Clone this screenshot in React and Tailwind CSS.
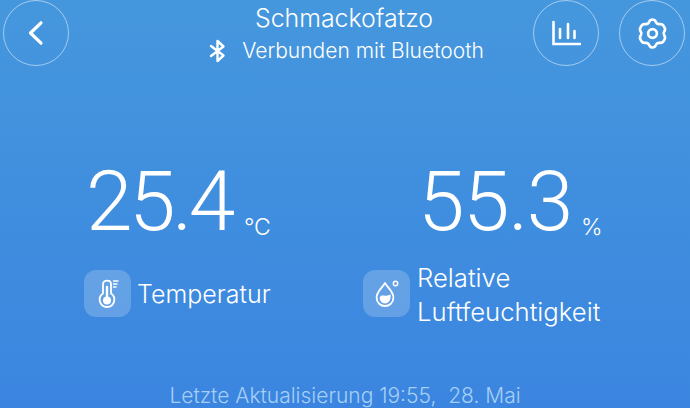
const font = { fontFamily: '"Inter", "Noto Sans", sans-serif' };
const numberFont = { fontFamily: '"Roboto", sans-serif' };

const CircleButton = ({ children }) => (
  <div className="flex h-[66px] w-[66px] shrink-0 items-center justify-center rounded-full border border-white/50">
    {children}
  </div>
);

const Header = () => (
  <div className="grid h-[66px] grid-cols-[1fr_auto_1fr] items-start pl-[3px] pr-[5px]">
    <CircleButton>
      <svg width="24" height="30" viewBox="0 0 24 30" fill="none" stroke="white" strokeWidth="3.2" strokeLinecap="round" strokeLinejoin="round">
        <path d="M17 4.8 L6.5 15 L17 25.2" />
      </svg>
    </CircleButton>
    <div className="flex flex-col items-center pt-[2px] font-light text-white">
      <div className="text-[24.9px] leading-[32px]">Schmackofatzo</div>
      <div className="ml-[5px] flex items-center gap-[15px] pt-[2px] text-[21px] leading-[30px]">
        <svg width="18" height="24" viewBox="0 0 18 24" fill="none" stroke="white" strokeWidth="2.4" strokeLinejoin="round" strokeLinecap="round">
          <path d="M2 7 L14.5 16.5 L8.5 22 L8.5 2 L14.5 7.5 L2 17" />
        </svg>
        <span>Verbunden mit Bluetooth</span>
      </div>
    </div>
    <div className="flex justify-end gap-5">
      <CircleButton>
        <svg width="30" height="30" viewBox="0 0 30 30" fill="none" stroke="white" strokeWidth="2.6" strokeLinecap="round">
          <path d="M2.5 4 V26 H29" />
          <path d="M9 11 V20 M17 6 V20 M23.5 13 V20" />
        </svg>
      </CircleButton>
      <CircleButton>
        <svg width="35" height="35" viewBox="0 0 24 24" fill="none" stroke="white" strokeWidth="1.8" strokeLinecap="round" strokeLinejoin="round">
          <path d="M9.67 4.14 C10.2 2.9 10.9 2.4 12 2.4 C13.1 2.4 13.8 2.9 14.33 4.14 C14.75 5.1 15.8 5.7 16.85 5.58 C18.2 5.42 19 5.75 19.55 6.7 L20.3 8 C20.85 8.95 20.75 9.8 19.95 10.9 C19.3 11.75 19.3 12.25 19.95 13.1 C20.75 14.2 20.85 15.05 20.3 16 L19.55 17.3 C19 18.25 18.2 18.58 16.85 18.42 C15.8 18.3 14.75 18.9 14.33 19.86 C13.8 21.1 13.1 21.6 12 21.6 C10.9 21.6 10.2 21.1 9.67 19.86 C9.25 18.9 8.2 18.3 7.15 18.42 C5.8 18.58 5 18.25 4.45 17.3 L3.7 16 C3.15 15.05 3.25 14.2 4.05 13.1 C4.7 12.25 4.7 11.75 4.05 10.9 C3.25 9.8 3.15 8.95 3.7 8 L4.45 6.7 C5 5.75 5.8 5.42 7.15 5.58 C8.2 5.7 9.25 5.1 9.67 4.14 Z" />
          <circle cx="12" cy="12" r="3" />
        </svg>
      </CircleButton>
    </div>
  </div>
);

const Reading = ({ value, unit, numberClass, unitClass, children }) => (
  <div>
    <div className="flex items-end text-white">
      <span className={`text-[84px] font-[350] leading-[84px] ${numberClass}`} style={numberFont}>{value}</span>
      <span className={`mb-[5px] text-[23px] font-light leading-[24px] ${unitClass}`}>{unit}</span>
    </div>
    {children}
  </div>
);

const IconTile = ({ children, className = "" }) => (
  <div className={`flex h-[47px] w-[47px] shrink-0 items-center justify-center rounded-[12px] bg-white/20 ${className}`}>
    {children}
  </div>
);

const ThermometerIcon = () => (
  <svg width="24" height="32" viewBox="0 0 24 32" fill="none" stroke="white" strokeWidth="1.8" strokeLinecap="round">
    <path d="M7 6 C7 1.5 15 1.5 15 6 V15.5 C20.5 19 19 29 11 29 C3 29 1.5 19 7 15.5 Z" />
    <circle cx="11" cy="22.5" r="4" fill="white" stroke="none" />
    <path d="M11 9 V20" strokeWidth="2.4" />
    <path d="M17.5 3 H22 M17.5 6 H21 M17.5 9 H20" strokeWidth="1.4" />
  </svg>
);

const DropIcon = () => (
  <svg width="30" height="30" viewBox="0 0 30 30" fill="none" stroke="white" strokeWidth="1.8">
    <path d="M13 5 C10 10 4.6 13.5 4.6 19.5 C4.6 24.8 8.6 28 13 28 C17.4 28 21.4 24.8 21.4 19.5 C21.4 13.5 16 10 13 5 Z" strokeLinejoin="round" />
    <path d="M7.6 19.5 C10 15.5 12.5 19.5 18.4 16.5 C19.5 21 17 25.4 13 25.4 C10 25.4 7.8 23 7.6 19.5 Z" fill="white" stroke="none" />
    <circle cx="23.5" cy="5.5" r="2.2" strokeWidth="1.4" />
  </svg>
);

export default function App() {
  return (
    <div
      className="flex h-[408px] w-[690px] flex-col overflow-hidden bg-gradient-to-b from-[#4597dd] to-[#3b85e0]"
      style={font}
    >
      <Header />
      <div className="grid grid-cols-[334px_1fr] pl-[84px] pt-[94px]">
        <Reading value="25.4" unit="°C" numberClass="pl-[2px] tracking-[-3.5px]" unitClass="ml-[12px]">
          <div className="mt-[26px] flex items-center gap-[6px]">
            <IconTile><ThermometerIcon /></IconTile>
            <span className="text-[25px] font-light leading-[34px] text-white">Temperatur</span>
          </div>
        </Reading>
        <Reading value="55.3" unit="%" numberClass="tracking-[-1.5px]" unitClass="ml-[9px]">
          <div className="mt-[17px] -ml-[55px] flex items-center gap-[7px]">
            <IconTile className="mb-[4px]"><DropIcon /></IconTile>
            <span className="text-[25.7px] font-light leading-[34px] text-white">
              Relative
              <br />
              Luftfeuchtigkeit
            </span>
          </div>
        </Reading>
      </div>
      <div className="mt-auto text-center text-[21px] font-light leading-[24px] text-[#a6cff5]">
        Letzte Aktualisierung 19:55,&nbsp; 28. Mai
      </div>
    </div>
  );
}
